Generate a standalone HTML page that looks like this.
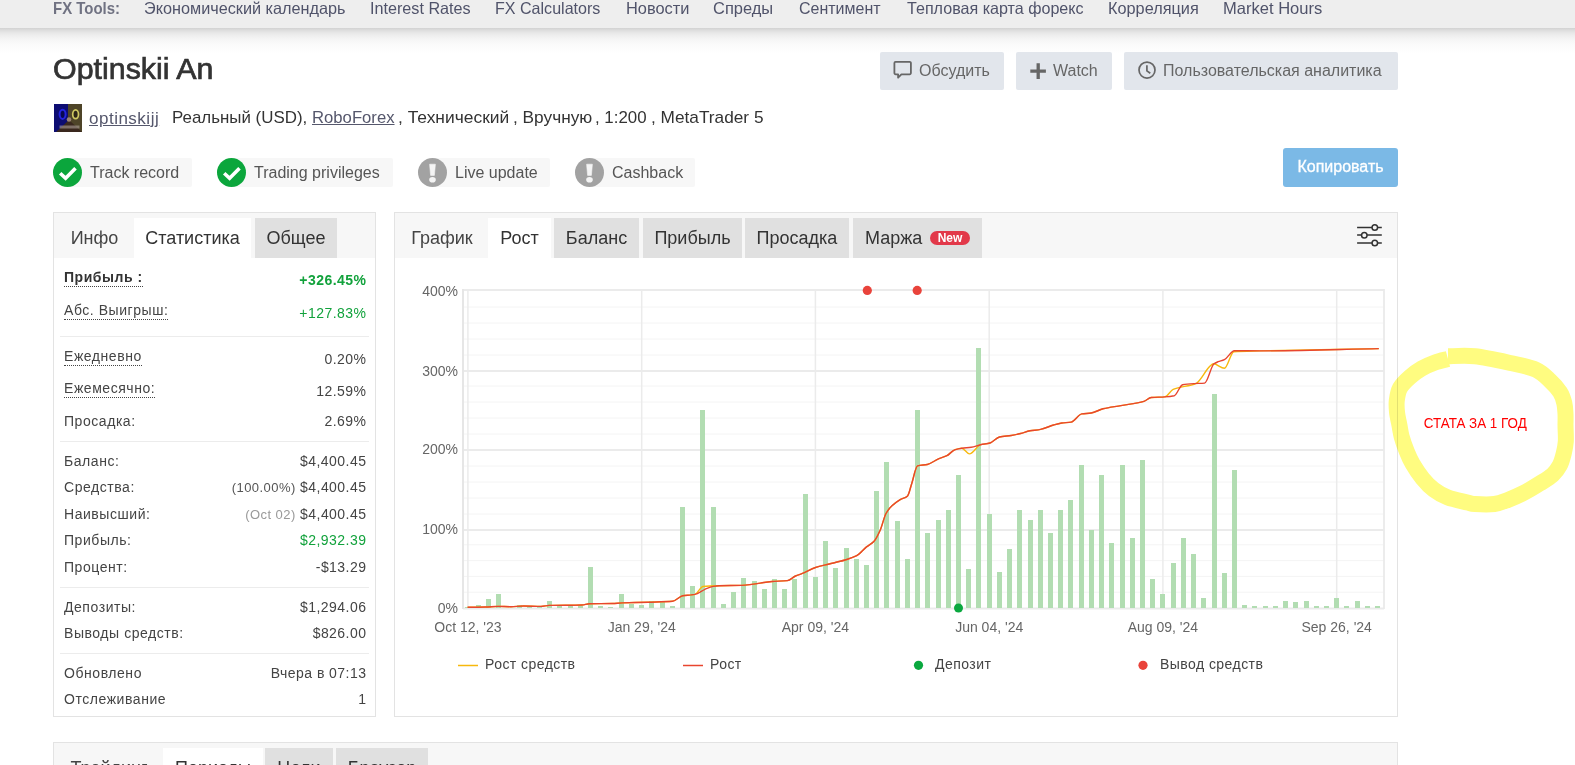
<!DOCTYPE html>
<html><head><meta charset="utf-8">
<style>
*{box-sizing:border-box}
html,body{margin:0;padding:0;background:#fff;width:1575px;height:765px;overflow:hidden;position:relative;font-family:"Liberation Sans",sans-serif;color:#333}
.a{position:absolute;white-space:nowrap}
.info{top:106px;font-size:17px;line-height:24px;color:#333;transform-origin:0 0}
.lnk{text-decoration:underline;color:#55576c}
#nav{position:absolute;left:0;top:0;width:1575px;height:28px;background:#eeeeee}
#shadow{position:absolute;left:0;top:28px;width:1575px;height:26px;background:linear-gradient(#d2d2d2 0,#dcdcdc 2px,#e8e8e8 5px,#efefef 8px,#f6f6f6 12px,#fbfbfb 17px,#fdfdfd 21px,#fff 26px)}
#nav span{position:absolute;top:-2px;font-size:16.5px;color:#50536a;line-height:20px;transform-origin:0 0}
#nav span.b{font-weight:bold;color:#707282}
.btn{position:absolute;top:52px;height:38px;background:#e2e6ec;border-radius:2px;color:#666;font-size:16px;line-height:38px}
.badge{position:absolute;top:158px;height:29px;font-size:16px;color:#555;line-height:29px}
.badge:before{content:'';position:absolute;left:14px;top:0;right:0;bottom:0;background:#f7f7f7;border-radius:2px}
.badge .ic{position:absolute;left:0;top:0;width:29px;height:29px;border-radius:50%}
.badge .t{position:absolute;left:37px;top:0}
.panel{position:absolute;border:1px solid #e3e3e3;background:#fff}
.tabbar{position:absolute;left:0;top:0;right:0;height:45px;background:#f7f7f7}
.tab{position:absolute;top:5px;height:40px;font-size:18px;line-height:40px;color:#444}
.tab.on{background:#fff;color:#333}
.tab.g{background:#e0e0e0;color:#333}
.row{position:absolute;left:10px;right:8.6px;font-size:14px;color:#444;height:20px;letter-spacing:0.35px}
.row .l{position:absolute;left:0;letter-spacing:0.55px}
.row .r{position:absolute;right:0;letter-spacing:0.45px}
.dot{border-bottom:1px dotted #444;padding-bottom:1px}
.sep{position:absolute;left:6px;right:6px;height:1px;background:#ececec}
</style></head><body>
<div id="shadow"></div><div id="nav"><span class="b" style="left:52.5px;transform:scaleX(0.9072)">FX Tools:</span><span class="" style="left:143.7px;transform:scaleX(0.9842)">Экономический календарь</span><span class="" style="left:370.0px;transform:scaleX(0.9802)">Interest Rates</span><span class="" style="left:495.2px;transform:scaleX(0.9738)">FX Calculators</span><span class="" style="left:626.1px;transform:scaleX(0.9936)">Новости</span><span class="" style="left:713.2px;transform:scaleX(0.9967)">Спреды</span><span class="" style="left:798.7px;transform:scaleX(0.9689)">Сентимент</span><span class="" style="left:907.1px;transform:scaleX(0.9757)">Тепловая карта форекс</span><span class="" style="left:1107.7px;transform:scaleX(0.9867)">Корреляция</span><span class="" style="left:1223.2px;transform:scaleX(1.0021)">Market Hours</span></div>

<div class="a" style="left:53px;top:50px;font-size:30.4px;line-height:36px;color:#333;-webkit-text-stroke:0.7px #333">Optinskii An</div>

<svg class="a" style="left:54px;top:104px" width="28" height="28" viewBox="0 0 28 28"><rect width="14" height="28" fill="#0d0d72"/><rect x="14" width="14" height="28" fill="#4e4428"/><polygon points="2,28 15,16 28,28" fill="#3a281e"/><ellipse cx="8.6" cy="10.3" rx="3.0" ry="4.6" fill="#080850" stroke="#2424e0" stroke-width="2"/><ellipse cx="21.6" cy="10.3" rx="2.9" ry="4.4" fill="#2e2616" stroke="#cfc862" stroke-width="1.7"/><circle cx="15" cy="15.5" r="2.3" fill="#9a8476"/><rect x="5.5" y="21.5" width="20" height="3" fill="#b8aca4" opacity="0.55"/></svg>
<div class="a" style="left:89px;top:107px;font-size:17px;line-height:24px;color:#55576c;letter-spacing:0.5px"><span style="text-decoration:underline">optinskijj</span></div>
<span class="a info" style="left:172.1px;transform:scaleX(0.9940)">Реальный (USD),</span><span class="a info lnk" style="left:311.6px;transform:scaleX(0.9812)">RoboForex</span><span class="a info" style="left:398.0px;transform:scaleX(1.0243)">, Технический</span><span class="a info" style="left:513.1px;transform:scaleX(1.0159)">, Вручную</span><span class="a info" style="left:595.2px;transform:scaleX(0.9922)">, 1:200</span><span class="a info" style="left:651.0px;transform:scaleX(1.0146)">, MetaTrader 5</span>

<div class="btn" style="left:880px;width:124px">
 <svg class="a" style="left:13px;top:7px" width="22" height="22" viewBox="0 0 22 22"><path d="M2.6 2.9 h14.1 a1.2 1.2 0 0 1 1.2 1.2 v10 a1.2 1.2 0 0 1 -1.2 1.2 h-8.3 l-3.3 3.4 v-3.4 h-2.5 a1.2 1.2 0 0 1 -1.2 -1.2 v-10 a1.2 1.2 0 0 1 1.2 -1.2z" fill="none" stroke="#666" stroke-width="1.8" stroke-linejoin="round"/></svg>
 <span class="a" style="left:39px;top:0">Обсудить</span></div>
<div class="btn" style="left:1016px;width:96px">
 <svg class="a" style="left:13.5px;top:10.5px" width="17" height="17" viewBox="0 0 17 17"><path d="M8.2 0.3v15.6M0.3 8.1h15.6" stroke="#666" stroke-width="3.3"/></svg>
 <span class="a" style="left:37px;top:0">Watch</span></div>
<div class="btn" style="left:1124px;width:274px">
 <svg class="a" style="left:12px;top:8px" width="22" height="22" viewBox="0 0 22 22"><circle cx="11" cy="10.1" r="8.0" fill="none" stroke="#666" stroke-width="1.7"/><path d="M10.9 5.2 V10.9 L14.3 13.3" fill="none" stroke="#666" stroke-width="1.7"/></svg>
 <span class="a" style="left:39px;top:0">Пользовательская аналитика</span></div>

<div class="badge" style="left:53px;width:139px"><div class="ic" style="background:#0ba63c"><svg width="29" height="29"><path d="M7.2 15.2 l5.4 5 l9.9 -9.9" fill="none" stroke="#fff" stroke-width="3.6"/></svg></div><span class="t">Track record</span></div>
<div class="badge" style="left:217px;width:176px"><div class="ic" style="background:#0ba63c"><svg width="29" height="29"><path d="M7.2 15.2 l5.4 5 l9.9 -9.9" fill="none" stroke="#fff" stroke-width="3.6"/></svg></div><span class="t">Trading privileges</span></div>
<div class="badge" style="left:418px;width:132px"><div class="ic" style="background:#a2a2a2"><svg width="29" height="29"><path d="M11.6 6.2 h5.8 l-1 11.2 h-3.8z" fill="#f4f4f4" stroke="#f4f4f4" stroke-width="0.6" stroke-linejoin="round"/><ellipse cx="14.5" cy="21.8" rx="3.3" ry="2.8" fill="#f4f4f4"/></svg></div><span class="t">Live update</span></div>
<div class="badge" style="left:575px;width:120px"><div class="ic" style="background:#a2a2a2"><svg width="29" height="29"><path d="M11.6 6.2 h5.8 l-1 11.2 h-3.8z" fill="#f4f4f4" stroke="#f4f4f4" stroke-width="0.6" stroke-linejoin="round"/><ellipse cx="14.5" cy="21.8" rx="3.3" ry="2.8" fill="#f4f4f4"/></svg></div><span class="t">Cashback</span></div>

<div class="a" style="left:1283px;top:148px;width:115px;height:39px;background:#7bb9e6;border-radius:3px;color:#fff;font-size:16px;line-height:37px;text-align:center;-webkit-text-stroke:0.3px #fff">Копировать</div>

<!-- stats panel -->
<div class="panel" style="left:53px;top:212px;width:323px;height:505px">
 <div class="tabbar"></div>
 <div class="tab" style="left:0;width:81px;text-align:center">Инфо</div>
 <div class="tab on" style="left:80px;width:117px;text-align:center">Статистика</div>
 <div class="tab g" style="left:201px;width:82px;text-align:center">Общее</div>
 <div class="row" style="top:56px"><span class="l dot" style="font-weight:bold;color:#333">Прибыль :</span></div>
 <div class="row" style="top:59px"><span class="r" style="font-weight:bold;color:#12a23c">+326.45%</span></div>
 <div class="row" style="top:89px"><span class="l dot">Абс. Выигрыш:</span></div>
 <div class="row" style="top:92px"><span class="r" style="color:#12a23c">+127.83%</span></div>
 <div class="sep" style="top:123px"></div>
 <div class="row" style="top:135px"><span class="l dot">Ежедневно</span></div>
 <div class="row" style="top:138px"><span class="r">0.20%</span></div>
 <div class="row" style="top:167px"><span class="l dot">Ежемесячно:</span></div>
 <div class="row" style="top:170px"><span class="r">12.59%</span></div>
 <div class="row" style="top:200px"><span class="l">Просадка:</span><span class="r">2.69%</span></div>
 <div class="sep" style="top:228px"></div>
 <div class="row" style="top:240px"><span class="l">Баланс:</span><span class="r">$4,400.45</span></div>
 <div class="row" style="top:266px"><span class="l">Средства:</span><span class="r"><span style="font-size:13px;color:#555">(100.00%)</span> $4,400.45</span></div>
 <div class="row" style="top:293px"><span class="l">Наивысший:</span><span class="r"><span style="font-size:13px;color:#999">(Oct 02)</span> $4,400.45</span></div>
 <div class="row" style="top:319px"><span class="l">Прибыль:</span><span class="r" style="color:#12a23c">$2,932.39</span></div>
 <div class="row" style="top:346px"><span class="l">Процент:</span><span class="r">-$13.29</span></div>
 <div class="sep" style="top:374px"></div>
 <div class="row" style="top:386px"><span class="l">Депозиты:</span><span class="r">$1,294.06</span></div>
 <div class="row" style="top:412px"><span class="l">Выводы средств:</span><span class="r">$826.00</span></div>
 <div class="sep" style="top:440px"></div>
 <div class="row" style="top:452px"><span class="l">Обновлено</span><span class="r">Вчера в 07:13</span></div>
 <div class="row" style="top:478px"><span class="l">Отслеживание</span><span class="r">1</span></div>
</div>

<!-- chart panel -->
<div class="panel" style="left:394px;top:212px;width:1004px;height:505px">
 <div class="tabbar"></div>
 <div class="tab" style="left:0;width:94px;text-align:center">График</div>
 <div class="tab on" style="left:93px;width:63px;text-align:center">Рост</div>
 <div class="tab g" style="left:159px;width:85px;text-align:center">Баланс</div>
 <div class="tab g" style="left:248px;width:99px;text-align:center">Прибыль</div>
 <div class="tab g" style="left:350px;width:104px;text-align:center">Просадка</div>
 <div class="tab g" style="left:458px;width:129px"><span class="a" style="left:12px;top:0">Маржа</span><span class="a" style="left:77px;top:13px;width:40px;height:14px;border-radius:7px;background:#e2394a;color:#fff;font-size:12px;line-height:14px;text-align:center;font-weight:bold">New</span></div>
 <svg class="a" style="left:960px;top:10px" width="30" height="26" viewBox="0 0 30 26"><g stroke="#333" stroke-width="1.5" fill="#f5f5f5"><path d="M2.1 4.4h24.7M2.1 12.1h24.7M2.1 20.1h24.7"/><circle cx="19.8" cy="4.5" r="2.75"/><circle cx="9.3" cy="12.2" r="2.75"/><circle cx="19.8" cy="19.9" r="2.75"/></g></svg>
</div>

<div class="panel" style="left:53px;top:742px;width:1345px;height:40px">
 <div class="tabbar"></div>
 <div class="tab" style="left:0;width:110px;text-align:center">Трейдинг</div>
 <div class="tab on" style="left:109px;width:100px;text-align:center">Периоды</div>
 <div class="tab g" style="left:211px;width:68px;text-align:center">Цели</div>
 <div class="tab g" style="left:282px;width:92px;text-align:center">Браузер</div>
</div>

<svg class="a" style="left:0;top:0" width="1575" height="765" viewBox="0 0 1575 765">
<g><line x1="463" y1="592.2" x2="1384" y2="592.2" stroke="#f4f4f4" stroke-width="1"/>
<line x1="463" y1="576.4" x2="1384" y2="576.4" stroke="#f4f4f4" stroke-width="1"/>
<line x1="463" y1="560.6" x2="1384" y2="560.6" stroke="#f4f4f4" stroke-width="1"/>
<line x1="463" y1="544.8" x2="1384" y2="544.8" stroke="#f4f4f4" stroke-width="1"/>
<line x1="463" y1="514.0" x2="1384" y2="514.0" stroke="#f4f4f4" stroke-width="1"/>
<line x1="463" y1="498.0" x2="1384" y2="498.0" stroke="#f4f4f4" stroke-width="1"/>
<line x1="463" y1="482.0" x2="1384" y2="482.0" stroke="#f4f4f4" stroke-width="1"/>
<line x1="463" y1="466.0" x2="1384" y2="466.0" stroke="#f4f4f4" stroke-width="1"/>
<line x1="463" y1="434.0" x2="1384" y2="434.0" stroke="#f4f4f4" stroke-width="1"/>
<line x1="463" y1="418.0" x2="1384" y2="418.0" stroke="#f4f4f4" stroke-width="1"/>
<line x1="463" y1="402.0" x2="1384" y2="402.0" stroke="#f4f4f4" stroke-width="1"/>
<line x1="463" y1="386.0" x2="1384" y2="386.0" stroke="#f4f4f4" stroke-width="1"/>
<line x1="463" y1="355.0" x2="1384" y2="355.0" stroke="#f4f4f4" stroke-width="1"/>
<line x1="463" y1="339.0" x2="1384" y2="339.0" stroke="#f4f4f4" stroke-width="1"/>
<line x1="463" y1="323.0" x2="1384" y2="323.0" stroke="#f4f4f4" stroke-width="1"/>
<line x1="463" y1="307.0" x2="1384" y2="307.0" stroke="#f4f4f4" stroke-width="1"/>
<line x1="463" y1="608.5" x2="1384" y2="608.5" stroke="#ebebeb" stroke-width="2"/>
<line x1="463" y1="530.0" x2="1384" y2="530.0" stroke="#ebebeb" stroke-width="2"/>
<line x1="463" y1="450.0" x2="1384" y2="450.0" stroke="#ebebeb" stroke-width="2"/>
<line x1="463" y1="371.0" x2="1384" y2="371.0" stroke="#ebebeb" stroke-width="2"/>
<line x1="463" y1="290.0" x2="1384" y2="290.0" stroke="#ebebeb" stroke-width="2"/>
<line x1="467.9" y1="289" x2="467.9" y2="608" stroke="#ebebeb" stroke-width="1.5"/>
<line x1="641.7" y1="289" x2="641.7" y2="608" stroke="#ebebeb" stroke-width="1.5"/>
<line x1="815.4" y1="289" x2="815.4" y2="608" stroke="#ebebeb" stroke-width="1.5"/>
<line x1="989.2" y1="289" x2="989.2" y2="608" stroke="#ebebeb" stroke-width="1.5"/>
<line x1="1162.9" y1="289" x2="1162.9" y2="608" stroke="#ebebeb" stroke-width="1.5"/>
<line x1="1336.7" y1="289" x2="1336.7" y2="608" stroke="#ebebeb" stroke-width="1.5"/></g>
<rect x="462" y="289" width="2" height="320" fill="#e6e6e6"/>
<rect x="1383.1" y="289" width="1.8" height="320" fill="#eaeaea"/>
<g fill="#b2ddb2"><rect x="465" y="607" width="5" height="1"/>
<rect x="476" y="605" width="5" height="3"/>
<rect x="486" y="599" width="5" height="9"/>
<rect x="496" y="594" width="5" height="14"/>
<rect x="517" y="605" width="5" height="3"/>
<rect x="527" y="607" width="5" height="1"/>
<rect x="537" y="606" width="5" height="2"/>
<rect x="547" y="601" width="5" height="7"/>
<rect x="557" y="606" width="5" height="2"/>
<rect x="568" y="606" width="5" height="2"/>
<rect x="578" y="606" width="5" height="2"/>
<rect x="588" y="567" width="5" height="41"/>
<rect x="598" y="606" width="5" height="2"/>
<rect x="608" y="607" width="5" height="1"/>
<rect x="619" y="594" width="5" height="14"/>
<rect x="629" y="604" width="5" height="4"/>
<rect x="639" y="605" width="5" height="3"/>
<rect x="649" y="601" width="5" height="7"/>
<rect x="660" y="602" width="5" height="6"/>
<rect x="670" y="606" width="5" height="2"/>
<rect x="680" y="507" width="5" height="101"/>
<rect x="690" y="586" width="5" height="22"/>
<rect x="700" y="410" width="5" height="198"/>
<rect x="711" y="507" width="5" height="101"/>
<rect x="721" y="604" width="5" height="4"/>
<rect x="731" y="592" width="5" height="16"/>
<rect x="741" y="578" width="5" height="30"/>
<rect x="752" y="581" width="5" height="27"/>
<rect x="762" y="589" width="5" height="19"/>
<rect x="772" y="579" width="5" height="29"/>
<rect x="782" y="589" width="5" height="19"/>
<rect x="792" y="579" width="5" height="29"/>
<rect x="803" y="494" width="5" height="114"/>
<rect x="813" y="577" width="5" height="31"/>
<rect x="823" y="541" width="5" height="67"/>
<rect x="833" y="568" width="5" height="40"/>
<rect x="844" y="548" width="5" height="60"/>
<rect x="854" y="559" width="5" height="49"/>
<rect x="864" y="565" width="5" height="43"/>
<rect x="874" y="491" width="5" height="117"/>
<rect x="884" y="462" width="5" height="146"/>
<rect x="895" y="521" width="5" height="87"/>
<rect x="905" y="559" width="5" height="49"/>
<rect x="915" y="410" width="5" height="198"/>
<rect x="925" y="533" width="5" height="75"/>
<rect x="936" y="520" width="5" height="88"/>
<rect x="946" y="510" width="5" height="98"/>
<rect x="956" y="475" width="5" height="133"/>
<rect x="966" y="569" width="5" height="39"/>
<rect x="976" y="348" width="5" height="260"/>
<rect x="987" y="514" width="5" height="94"/>
<rect x="997" y="572" width="5" height="36"/>
<rect x="1007" y="549" width="5" height="59"/>
<rect x="1017" y="510" width="5" height="98"/>
<rect x="1028" y="520" width="5" height="88"/>
<rect x="1038" y="510" width="5" height="98"/>
<rect x="1048" y="533" width="5" height="75"/>
<rect x="1058" y="510" width="5" height="98"/>
<rect x="1068" y="500" width="5" height="108"/>
<rect x="1079" y="465" width="5" height="143"/>
<rect x="1089" y="530" width="5" height="78"/>
<rect x="1099" y="475" width="5" height="133"/>
<rect x="1109" y="543" width="5" height="65"/>
<rect x="1120" y="465" width="5" height="143"/>
<rect x="1130" y="538" width="5" height="70"/>
<rect x="1140" y="460" width="5" height="148"/>
<rect x="1150" y="579" width="5" height="29"/>
<rect x="1160" y="594" width="5" height="14"/>
<rect x="1171" y="563" width="5" height="45"/>
<rect x="1181" y="538" width="5" height="70"/>
<rect x="1191" y="554" width="5" height="54"/>
<rect x="1201" y="598" width="5" height="10"/>
<rect x="1212" y="394" width="5" height="214"/>
<rect x="1222" y="573" width="5" height="35"/>
<rect x="1232" y="470" width="5" height="138"/>
<rect x="1242" y="605" width="5" height="3"/>
<rect x="1252" y="606" width="5" height="2"/>
<rect x="1263" y="606" width="5" height="2"/>
<rect x="1273" y="606" width="5" height="2"/>
<rect x="1283" y="601" width="5" height="7"/>
<rect x="1293" y="602" width="5" height="6"/>
<rect x="1304" y="601" width="5" height="7"/>
<rect x="1314" y="606" width="5" height="2"/>
<rect x="1324" y="606" width="5" height="2"/>
<rect x="1334" y="598" width="5" height="10"/>
<rect x="1344" y="606" width="5" height="2"/>
<rect x="1355" y="601" width="5" height="7"/>
<rect x="1365" y="606" width="5" height="2"/>
<rect x="1375" y="606" width="5" height="2"/></g>
<path d="M467.6,607.3 C473.5,607.2 479.5,607.2 485.4,607.0 C489.6,606.9 493.8,606.4 498.0,606.4 C502.3,606.4 506.5,606.7 510.8,606.7 C515.0,606.7 519.3,606.0 523.5,606.0 C529.3,606.0 535.2,606.4 541.0,606.4 C543.7,606.4 546.3,605.5 549.0,605.4 C560.0,605.1 571.0,605.3 582.0,605.0 C584.5,604.9 587.0,603.7 589.5,603.7 C597.1,603.6 604.8,603.6 612.4,603.5 C615.8,603.4 619.1,603.0 622.5,602.9 C631.0,602.6 639.5,602.5 648.0,602.2 C656.2,601.9 664.3,601.9 672.5,601.3 C675.9,601.0 679.3,596.3 682.7,595.7 C685.4,595.3 688.1,595.2 690.8,594.9 C692.2,594.7 693.5,594.7 694.9,594.4 C697.6,593.9 700.3,586.8 703.0,586.5 C708.4,585.9 713.9,585.8 719.3,585.7 C726.7,585.5 734.2,585.6 741.6,585.4 C745.0,585.3 748.4,584.8 751.8,584.4 C758.5,583.6 765.3,582.0 772.0,581.5 C777.1,581.1 782.3,581.2 787.4,580.6 C790.1,580.3 792.8,577.2 795.5,576.0 C797.6,575.1 799.7,574.5 801.8,573.7 C806.4,571.9 810.9,569.0 815.5,567.5 C820.1,566.0 824.6,565.2 829.2,564.0 C834.5,562.7 839.7,561.6 845.0,560.0 C848.9,558.8 852.8,557.8 856.7,555.7 C860.0,554.0 863.2,549.6 866.5,546.9 C869.1,544.8 871.7,543.8 874.3,541.0 C876.3,538.9 878.2,534.6 880.2,530.2 C882.1,525.9 884.1,517.0 886.0,513.5 C888.0,509.9 890.0,507.6 892.0,505.7 C894.6,503.2 897.2,501.4 899.8,499.8 C902.4,498.2 905.0,498.3 907.6,495.9 C908.9,494.7 910.3,488.0 911.6,484.0 C913.6,478.1 915.5,466.5 917.5,465.9 C920.8,464.9 924.0,465.2 927.3,464.5 C931.2,463.6 935.1,460.2 939.0,458.6 C941.6,457.5 944.3,457.0 946.9,455.7 C949.5,454.4 952.1,450.7 954.7,449.8 C957.1,449.0 959.4,448.2 961.8,448.2 C964.3,448.2 966.9,453.9 969.4,453.9 C973.1,453.9 976.9,445.8 980.6,444.7 C983.7,443.8 986.9,443.9 990.0,443.0 C993.1,442.1 996.3,437.7 999.4,437.0 C1003.3,436.1 1007.3,436.1 1011.2,435.5 C1014.3,435.0 1017.5,434.3 1020.6,433.5 C1023.7,432.7 1026.9,431.4 1030.0,430.8 C1033.5,430.2 1037.1,430.1 1040.6,429.4 C1044.9,428.6 1049.2,426.2 1053.5,425.0 C1056.3,424.2 1059.0,423.4 1061.8,423.0 C1064.9,422.6 1068.1,422.6 1071.2,422.1 C1074.7,421.5 1078.3,414.5 1081.8,413.9 C1084.9,413.4 1088.1,413.5 1091.2,413.0 C1095.1,412.4 1099.1,409.8 1103.0,408.8 C1109.0,407.3 1114.9,406.7 1120.9,405.6 C1128.6,404.2 1136.2,403.7 1143.9,401.4 C1146.3,400.7 1148.8,397.7 1151.2,397.5 C1155.7,397.1 1160.3,397.3 1164.8,396.9 C1167.6,396.6 1170.4,390.7 1173.2,389.4 C1180.9,386.0 1188.5,386.8 1196.2,383.3 C1200.7,381.2 1205.3,370.3 1209.8,366.4 C1211.0,365.3 1212.3,363.8 1213.5,363.8 C1217.1,363.8 1220.8,368.3 1224.4,368.3 C1227.6,368.3 1230.7,351.9 1233.9,351.7 C1242.6,351.1 1251.3,351.1 1260.0,350.9 C1299.6,349.9 1339.2,349.4 1378.8,348.6" fill="none" stroke="#f7b80d" stroke-width="1.4"/>
<path d="M467.6,607.3 C473.5,607.2 479.5,607.2 485.4,607.0 C489.6,606.9 493.8,606.4 498.0,606.4 C502.3,606.4 506.5,606.7 510.8,606.7 C515.0,606.7 519.3,606.0 523.5,606.0 C529.3,606.0 535.2,606.4 541.0,606.4 C543.7,606.4 546.3,605.5 549.0,605.4 C560.0,605.1 571.0,605.3 582.0,605.0 C584.5,604.9 587.0,603.7 589.5,603.7 C597.1,603.6 604.8,603.6 612.4,603.5 C615.8,603.4 619.1,603.0 622.5,602.9 C631.0,602.6 639.5,602.5 648.0,602.2 C656.2,601.9 664.3,601.9 672.5,601.3 C675.9,601.0 679.3,596.3 682.7,595.7 C685.4,595.3 688.1,595.2 690.8,594.9 C692.2,594.7 693.5,594.6 694.9,594.4 C698.3,593.8 701.6,590.7 705.0,589.3 C707.7,588.2 710.5,586.9 713.2,586.4 C715.2,586.1 717.3,585.8 719.3,585.7 C726.7,585.5 734.2,585.6 741.6,585.4 C745.0,585.3 748.4,584.8 751.8,584.4 C758.5,583.6 765.3,582.0 772.0,581.5 C777.1,581.1 782.3,581.2 787.4,580.6 C790.1,580.3 792.8,577.2 795.5,576.0 C797.6,575.1 799.7,574.5 801.8,573.7 C806.4,571.9 810.9,569.0 815.5,567.5 C820.1,566.0 824.6,565.2 829.2,564.0 C834.5,562.7 839.7,561.6 845.0,560.0 C848.9,558.8 852.8,557.8 856.7,555.7 C860.0,554.0 863.2,549.6 866.5,546.9 C869.1,544.8 871.7,543.8 874.3,541.0 C876.3,538.9 878.2,534.6 880.2,530.2 C882.1,525.9 884.1,517.0 886.0,513.5 C888.0,509.9 890.0,507.6 892.0,505.7 C894.6,503.2 897.2,501.4 899.8,499.8 C902.4,498.2 905.0,498.3 907.6,495.9 C908.9,494.7 910.3,488.0 911.6,484.0 C913.6,478.1 915.5,466.5 917.5,465.9 C920.8,464.9 924.0,465.2 927.3,464.5 C931.2,463.6 935.1,460.2 939.0,458.6 C941.6,457.5 944.3,457.0 946.9,455.7 C949.5,454.4 952.1,450.7 954.7,449.8 C957.1,449.0 959.4,448.5 961.8,448.2 C964.9,447.8 968.1,447.7 971.2,447.3 C974.3,446.9 977.5,445.4 980.6,444.7 C983.7,444.0 986.9,443.9 990.0,443.0 C993.1,442.1 996.3,437.7 999.4,437.0 C1003.3,436.1 1007.3,436.1 1011.2,435.5 C1014.3,435.0 1017.5,434.3 1020.6,433.5 C1023.7,432.7 1026.9,431.4 1030.0,430.8 C1033.5,430.2 1037.1,430.1 1040.6,429.4 C1044.9,428.6 1049.2,426.2 1053.5,425.0 C1056.3,424.2 1059.0,423.4 1061.8,423.0 C1064.9,422.6 1068.1,422.6 1071.2,422.1 C1074.7,421.5 1078.3,414.5 1081.8,413.9 C1084.9,413.4 1088.1,413.5 1091.2,413.0 C1095.1,412.4 1099.1,409.8 1103.0,408.8 C1109.0,407.3 1114.9,406.7 1120.9,405.6 C1128.6,404.2 1136.2,403.7 1143.9,401.4 C1146.3,400.7 1148.8,397.7 1151.2,397.5 C1155.7,397.1 1160.3,397.2 1164.8,396.9 C1167.9,396.7 1171.1,396.4 1174.2,395.7 C1177.0,395.0 1179.8,385.2 1182.6,384.7 C1186.4,384.0 1190.3,383.8 1194.1,383.6 C1197.6,383.4 1201.1,383.4 1204.6,383.1 C1207.7,382.8 1210.9,366.1 1214.0,363.8 C1215.4,362.8 1216.8,362.3 1218.2,361.7 C1220.3,360.9 1222.3,360.6 1224.4,359.6 C1227.7,358.0 1231.1,350.7 1234.4,350.7 C1242.9,350.7 1251.5,350.9 1260.0,350.9 C1299.6,350.9 1339.2,349.4 1378.8,348.6" fill="none" stroke="#e8452f" stroke-width="1.4"/>
<circle cx="958.5" cy="608" r="4.5" fill="#0aa83f"/>
<circle cx="867.3" cy="290.4" r="4.6" fill="#e9433b"/>
<circle cx="917.2" cy="290.4" r="4.6" fill="#e9433b"/>
<g font-family="Liberation Sans" font-size="14" fill="#666"><text x="458" y="612.8" text-anchor="end">0%</text><text x="458" y="533.6" text-anchor="end">100%</text><text x="458" y="453.6" text-anchor="end">200%</text><text x="458" y="375.6" text-anchor="end">300%</text><text x="458" y="295.8" text-anchor="end">400%</text><text x="467.9" y="632" text-anchor="middle">Oct 12, '23</text><text x="641.7" y="632" text-anchor="middle">Jan 29, '24</text><text x="815.4" y="632" text-anchor="middle">Apr 09, '24</text><text x="989.2" y="632" text-anchor="middle">Jun 04, '24</text><text x="1162.9" y="632" text-anchor="middle">Aug 09, '24</text><text x="1336.7" y="632" text-anchor="middle">Sep 26, '24</text></g>
<g font-family="Liberation Sans" font-size="14" fill="#444" letter-spacing="0.45">
<line x1="458" y1="665.5" x2="478" y2="665.5" stroke="#f7b80d" stroke-width="1.5"/><text x="485" y="668.6">Рост средств</text>
<line x1="683" y1="665.5" x2="703" y2="665.5" stroke="#e8452f" stroke-width="1.5"/><text x="710" y="668.6">Рост</text>
<circle cx="918.5" cy="665.3" r="4.6" fill="#0aa83f"/><text x="935" y="668.6">Депозит</text>
<circle cx="1143" cy="665.3" r="4.6" fill="#e9433b"/><text x="1160" y="668.6">Вывод средств</text>
</g>
<path d="M1448.0,356.3 C1452.5,356.3 1464.4,355.1 1475.0,356.3 C1485.6,357.5 1501.5,361.1 1511.7,363.3 C1521.9,365.6 1529.6,366.9 1536.0,369.8 C1542.4,372.7 1546.0,376.9 1550.0,380.6 C1554.0,384.3 1557.6,388.3 1560.0,392.0 C1562.4,395.7 1563.4,399.3 1564.3,403.0 C1565.2,406.7 1565.3,410.3 1565.5,414.0 C1565.7,417.7 1565.5,420.4 1565.5,425.0 C1565.5,429.6 1566.1,436.8 1565.8,441.5 C1565.5,446.2 1564.8,449.2 1563.8,453.2 C1562.8,457.2 1561.6,462.0 1559.7,465.6 C1557.8,469.2 1555.9,471.8 1552.6,474.8 C1549.3,477.8 1544.6,480.5 1539.7,483.6 C1534.8,486.7 1528.5,490.5 1523.2,493.2 C1517.9,495.9 1512.7,498.1 1507.9,499.9 C1503.1,501.7 1499.9,503.3 1494.4,504.0 C1488.9,504.7 1479.5,504.3 1475.0,504.0 C1470.5,503.7 1471.9,503.5 1467.4,502.4 C1462.9,501.3 1453.5,499.7 1447.9,497.6 C1442.3,495.5 1438.0,492.9 1433.8,489.7 C1429.6,486.5 1426.1,482.8 1422.6,478.5 C1419.1,474.2 1415.2,468.3 1412.6,463.8 C1410.0,459.3 1408.6,456.0 1406.8,451.5 C1405.0,447.0 1402.9,441.2 1401.7,436.8 C1400.5,432.4 1400.2,429.1 1399.4,425.0 C1398.6,420.9 1397.4,416.1 1397.0,412.0 C1396.6,407.9 1396.3,404.6 1396.8,400.6 C1397.3,396.6 1397.8,391.9 1400.0,388.0 C1402.2,384.1 1406.4,380.2 1410.0,377.0 C1413.6,373.8 1417.5,370.9 1421.7,368.5 C1425.9,366.1 1430.6,364.1 1435.0,362.5 C1439.4,360.9 1445.8,359.6 1448.0,359.0" fill="none" stroke="#fffc80" stroke-width="16" style="mix-blend-mode:multiply" stroke-linejoin="round" stroke-linecap="butt"/>
<text x="1423.8" y="428" font-family="Liberation Sans" font-size="14.3" fill="#ff0000" textLength="103" lengthAdjust="spacingAndGlyphs">СТАТА ЗА 1 ГОД</text>
</svg>
</body></html>
